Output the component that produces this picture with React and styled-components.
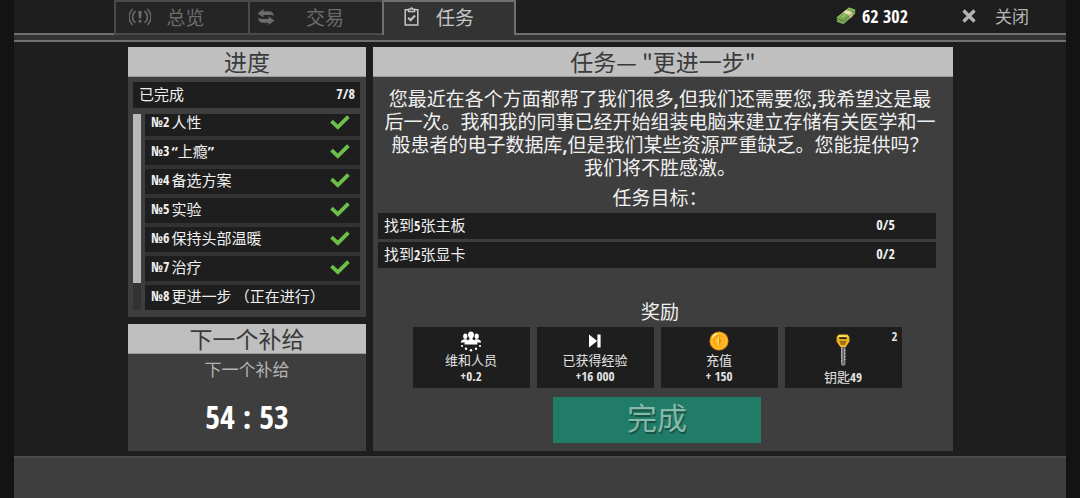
import React from "react";
import styled, { createGlobalStyle } from "styled-components";

const GlobalStyle = createGlobalStyle`
  *, *::before, *::after { box-sizing: border-box; }
  body {
    margin: 0;
    background: #131313;
    color: #f0f0f0;
    font-family: "Noto Sans CJK SC", sans-serif;
    font-size: 15px;
  }
  button { font: inherit; color: inherit; border: 0; padding: 0; background: none; cursor: pointer; }
  h2, h3, p, ul { margin: 0; padding: 0; list-style: none; font-weight: 400; }
  svg { display: block; }
`;

const Screen = styled.div`
  display: flex;
  flex-direction: column;
  min-height: 100vh;
  margin: 0 14px;
  background: #1e1e1e;
`;

/* Numbers are set in a bold condensed face next to regular CJK text. */
const Num = styled.b`
  font-family: "Open Sans Condensed", "Open Sans", sans-serif;
  font-weight: 700;
  font-size: ${(p) => p.$size || 14}px;
  line-height: 1;
`;

const Header = styled.header`
  display: flex;
  align-items: flex-start;
  padding: 0 37px 0 100px;
  background: linear-gradient(to top, #6f6f6f 2px, #333 2px, #333 7px, #6f6f6f 7px, #6f6f6f 9px, transparent 9px);
`;

const Tabs = styled.nav`
  display: flex;
  padding-bottom: 7px;
`;

const Tab = styled.button`
  display: grid;
  grid-template-columns: auto 1fr;
  align-items: center;
  width: 134px;
  height: 35px;
  padding: 0 ${(p) => p.$end}px ${(p) => (p.$active ? 4 : 2)}px ${(p) => p.$start}px;
  border: solid ${(p) => (p.$active ? "#6f6f6f" : "#4a4a4a")};
  border-width: ${(p) => (p.$active ? "2px 2px 0" : "2px 0 2px 2px")};
  background: ${(p) => (p.$active ? "#333" : "#252525")};
  color: ${(p) => (p.$active ? "#c6c6c6" : "#6c6c6c")};
  font-size: 19px;
  line-height: 28px;
  white-space: nowrap;
`;

const HeaderTools = styled.div`
  display: flex;
  align-items: center;
  margin-left: auto;
  height: 32px;
`;

const Money = styled.span`
  display: flex;
  align-items: center;
  gap: 6px;
  margin-right: 54px;
  color: #fff;
`;

const CloseButton = styled.button`
  display: flex;
  align-items: center;
  gap: 19px;
  color: #b4b4b4;
  font-size: 17px;
  line-height: 30px;
`;

const Main = styled.main`
  display: grid;
  grid-template-columns: minmax(0, 238fr) minmax(0, 580fr);
  gap: 7px;
  flex: 1;
  padding: 5px 113px 5px 114px;
`;

const Side = styled.div`
  display: flex;
  flex-direction: column;
  gap: 7px;
`;

const Panel = styled.section`
  display: flex;
  flex-direction: column;
  background: #3e3e3e;
  flex: ${(p) => (p.$grow ? 1 : "none")};
`;

const PanelTitle = styled.h2`
  background: #bfbfbf;
  border-bottom: 1px solid #9a9a9a;
  color: #3a3a3a;
  font-size: 23px;
  line-height: 29px;
  text-align: center;
`;

const Row = styled.div`
  display: flex;
  align-items: center;
  gap: 2px;
  flex: none;
  height: ${(p) => p.$height || 25}px;
  padding: 0 ${(p) => p.$end || 5}px 3px 6px;
  background: #1e1e1e;
  line-height: 22px;
  white-space: nowrap;
`;

const Last = styled.span`
  display: flex;
  margin-left: auto;
`;

const ProgressBody = styled.div`
  display: flex;
  flex-direction: column;
  gap: 6px;
  padding: 5px 6px 7px 5px;
`;

const Scroller = styled.div`
  display: grid;
  grid-template-columns: 8px 1fr;
  gap: 4px;
  height: 196px;
`;

const Track = styled.div`
  background: #333;
`;

const Thumb = styled.div`
  height: 86%;
  background: #b9b9b9;
`;

const QuestList = styled.ul`
  display: flex;
  flex-direction: column;
  justify-content: flex-end;
  gap: 4px;
  overflow: hidden;
  background: #323232;
`;

const SupplyBody = styled.div`
  display: flex;
  flex-direction: column;
  align-items: center;
  gap: 16px;
  flex: 1;
  padding-top: 2px;
  color: #b4b4b4;
  font-size: 17px;
  line-height: 25px;
`;

const Timer = styled(Num)`
  color: #fff;
  line-height: 40px;
`;

const QuestBody = styled.div`
  display: flex;
  flex-direction: column;
  flex: 1;
  padding: 9px 17px 8px 5px;
  text-align: center;
`;

const Story = styled.p`
  margin-right: -6px;
  font-size: 19px;
  line-height: 23px;
`;

const Line = styled.span`
  display: block;
`;

const Comma = styled.span`
  font-family: "Open Sans Condensed", "Open Sans", sans-serif;
  line-height: 1;
`;

const SubTitle = styled.h3`
  margin-top: ${(p) => p.$gap}px;
  margin-right: -6px;
  font-size: 19px;
  line-height: 27px;
`;

const Goals = styled.ul`
  display: flex;
  flex-direction: column;
  gap: 3px;
  margin-top: 3px;
`;

const Rewards = styled.ul`
  display: grid;
  grid-template-columns: repeat(4, 117px);
  justify-content: center;
  gap: 7px;
  margin-top: 3px;
`;

const Reward = styled.li`
  position: relative;
  display: flex;
  flex-direction: column;
  align-items: center;
  height: 61px;
  padding-top: 3px;
  background: #1e1e1e;
  font-size: 13px;
  line-height: 16px;
  color: #e4e4e4;
`;

const RewardIcon = styled.div`
  display: flex;
  align-items: center;
  height: ${(p) => (p.$tall ? 39 : 22)}px;
`;

const RewardValue = styled(Num)`
  line-height: 17px;
`;

const Count = styled(Num)`
  position: absolute;
  top: 3px;
  right: 4px;
`;

const DoneButton = styled.button`
  align-self: center;
  width: 208px;
  margin-top: 9px;
  padding-bottom: 8px;
  background: #207c66;
  color: #86b9ab;
  font-size: 30px;
  line-height: 38px;
  text-shadow: 1px 2px 1px rgba(0, 0, 0, 0.35);
`;

const Footer = styled.footer`
  height: 42px;
  border-top: 2px solid #4c4c4c;
  background: #3e3e3e;
`;

const AlertIcon = () => (
  <svg width="22" height="18" viewBox="0 0 22 18" fill="none" stroke="currentColor" strokeWidth="1.5">
    <path d="M6.5 3.2a7.2 7.2 0 0 0 0 11.6M15.5 3.2a7.2 7.2 0 0 1 0 11.6M3.8 1a10.6 10.6 0 0 0 0 16M18.2 1a10.6 10.6 0 0 1 0 16" />
    <path d="M9.3 3h3.4l-.6 7.5H9.9zM9.6 12h2.8v2.6H9.6z" fill="currentColor" stroke="none" />
  </svg>
);

const TradeIcon = () => (
  <svg width="18" height="16" viewBox="0 0 18 16" fill="currentColor">
    <path d="M.5 4.4 6.5 0v2.2h5.500c2.800 0 4.600 1.800 4.900 5-1.200-.8-2.600-1.100-4.300-1.100H6.500v2.500z" />
    <path d="M17.5 11.6 11.5 16v-2.200H6c-2.800 0-4.600-1.800-4.900-5 1.200.8 2.600 1.100 4.300 1.100h6.100V7.400z" />
  </svg>
);

const ClipboardIcon = () => (
  <svg width="15" height="19" viewBox="0 0 15 19" fill="none" stroke="currentColor" strokeWidth="1.5">
    <path d="M4 2.800H1.200v15.200h12.600V2.800H11" />
    <path d="M4.500 4.600V2.200h1.700L7.500.9l1.300 1.300h1.700v2.400z" />
    <path d="m4.200 10.800 2.400 2.400 4.400-4.600" strokeWidth="2.2" />
  </svg>
);

const CashIcon = () => (
  <svg width="20" height="18" viewBox="0 0 20 18">
    <path d="M.5 10.500 13 .5l6.500 2.300-.5 4L7.500 17.500 1 15z" fill="#527a35" />
    <path d="M.5 10.500 13 .5l6.500 2.300L7.300 13.300z" fill="#93bf62" />
    <path d="m1 12.500 6.300 2.600L19.200 4.800M1 14l6.400 2.300L19 6.200" fill="none" stroke="#a5cb78" strokeWidth=".7" />
    <path d="M3.300 10.400 13.200 2.300l3.400 1.100-9.400 8.300z" fill="none" stroke="#5f8a3e" strokeWidth=".8" />
    <path d="m7 5.400 3-2.400 6.300 2.600.2 3.600-2.700 2.300-.4-3.600z" fill="#e6dfb4" />
    <path d="m13.400 7.900 2.900-2.300.2 3.600-2.700 2.300z" fill="#b9ae7c" />
  </svg>
);

const CloseIcon = () => (
  <svg width="14" height="14" viewBox="0 0 14 14" stroke="currentColor" strokeWidth="3.4">
    <path d="m1.5 1.500 11 11M12.500 1.500l-11 11" />
  </svg>
);

const CheckIcon = () => (
  <svg width="20" height="15" viewBox="0 0 20 15" fill="none" stroke="#6cc04a" strokeWidth="3.8" role="img" aria-label="已完成">
    <path d="m1.500 6.200 6.300 6L18.400 1.600" />
  </svg>
);

const PeopleIcon = () => (
  <svg width="22" height="21" viewBox="0 0 22 21" fill="#fff">
    <ellipse cx="5.3" cy="5.3" rx="2.1" ry="2.7" />
    <ellipse cx="16.7" cy="5.3" rx="2.1" ry="2.7" />
    <path d="M.8 11.400c0-1.900 1.300-2.200 3.300-3.100h2.600l2 3.100zM21.200 11.400c0-1.900-1.300-2.200-3.300-3.100h-2.600l-2 3.100z" />
    <path d="M11 .4c1.900 0 3 1.300 3 3.200 0 1.500-.6 2.900-1.500 3.700v1.200c2.800 1 5 1.600 5 5.100h-13c0-3.500 2.200-4.100 5-5.100V7.300C8.600 6.500 8 5.100 8 3.600 8 1.700 9.100.4 11 .4z" />
    <circle cx="2" cy="15" r="1.1" />
    <circle cx="6" cy="17.8" r="1.2" />
    <circle cx="11" cy="19.2" r="1.3" />
    <circle cx="16" cy="17.8" r="1.2" />
    <circle cx="20" cy="15" r="1.1" />
  </svg>
);

const SkipIcon = () => (
  <svg width="12" height="14" viewBox="0 0 12 14" fill="#fff">
    <path d="M0 .5 8.200 7 0 13.500zM8.400.5h3.200v13H8.400z" />
  </svg>
);

const CoinIcon = () => (
  <svg width="20" height="20" viewBox="0 0 20 20">
    <circle cx="10" cy="10" r="9.5" fill="#ef9412" />
    <circle cx="10" cy="10" r="8.3" fill="#ffc02e" />
    <circle cx="10" cy="10" r="6.2" fill="#f39d17" />
    <circle cx="10.5" cy="10.3" r="5.3" fill="#ffb522" />
    <path d="M10 5.600 12.600 10 10 14.400 7.400 10z" fill="#ffd84e" />
    <path d="M10 5.600 12.600 10 10 14.400z" fill="#e98c10" />
    <path d="M3.200 6.800A7.600 7.600 0 0 1 8 2.700" fill="none" stroke="#fff0b0" strokeWidth="1.2" />
  </svg>
);

const KeyIcon = () => (
  <svg width="14" height="32" viewBox="0 0 14 32">
    <path d="M5 12h4.400v18.500L7.200 32 5 30.500z" fill="#8d8d8d" />
    <path d="M6.700 13h1v17h-1z" fill="#4a4a4a" />
    <path d="M5 15h1.200M5 18h1.200M5 21h1.200M5 24h1.200M5 27h1.200M8.200 16.500h1.200M8.200 19.500h1.200M8.200 22.500h1.200M8.200 25.500h1.200" stroke="#d2d2d2" />
    <path d="M2.500.5h9L13.400 3v4.500L9.800 13H4.200L.6 7.500V3z" fill="#e9b81f" />
    <path d="M3 1.200h8L12.500 3H1.500z" fill="#ffdf57" />
    <path d="M3.300 3.200h7.400v1.900H3.300z" fill="#2b2412" />
    <path d="M3.300 6.800h7.400L9 11H5z" fill="#a86a12" />
  </svg>
);

const tabs = [
  { label: "总览", Icon: AlertIcon, start: 13, end: 28 },
  { label: "交易", Icon: TradeIcon, start: 7, end: 7 },
  { label: "任务", Icon: ClipboardIcon, start: 20, end: 23, active: true },
];

const quests = [
  { no: 2, name: "人性", done: true },
  { no: 3, name: "“上瘾”", done: true, latinQuotes: true },
  { no: 4, name: "备选方案", done: true },
  { no: 5, name: "实验", done: true },
  { no: 6, name: "保持头部温暖", done: true },
  { no: 7, name: "治疗", done: true },
  { no: 8, name: "更进一步 （正在进行）", done: false },
];

const QuestName = styled.span`
  font-family: ${(p) => (p.$latinQuotes ? '"Open Sans Condensed", ' : "")} "Noto Sans CJK SC", sans-serif;
`;

const goals = [
  { before: "找到", amount: 5, after: "张主板", state: "0/5" },
  { before: "找到", amount: 2, after: "张显卡", state: "0/2" },
];

const rewards = [
  { label: "维和人员", value: "+0.2", Icon: PeopleIcon },
  { label: "已获得经验", value: "+16 000", Icon: SkipIcon },
  { label: "充值", value: "+ 150", Icon: CoinIcon },
];

export default function App() {
  return (
    <Screen>
      <GlobalStyle />
      <Header>
        <Tabs>
          {tabs.map(({ label, Icon, active, start, end }) => (
            <Tab key={label} $active={active} $start={start} $end={end} aria-current={active ? "page" : undefined}>
              <Icon />
              <span>{label}</span>
            </Tab>
          ))}
        </Tabs>
        <HeaderTools>
          <Money>
            <CashIcon />
            <Num $size={18}>62 302</Num>
          </Money>
          <CloseButton>
            <CloseIcon />
            关闭
          </CloseButton>
        </HeaderTools>
      </Header>

      <Main>
        <Side>
          <Panel>
            <PanelTitle>进度</PanelTitle>
            <ProgressBody>
              <Row $height={26}>
                已完成
                <Last>
                  <Num>7/8</Num>
                </Last>
              </Row>
              <Scroller>
                <Track>
                  <Thumb />
                </Track>
                <QuestList>
                  {quests.map((q) => (
                    <Row as="li" key={q.no} $end={10}>
                      <Num>№{q.no}</Num>
                      <QuestName $latinQuotes={q.latinQuotes}>{q.name}</QuestName>
                      {q.done && (
                        <Last>
                          <CheckIcon />
                        </Last>
                      )}
                    </Row>
                  ))}
                </QuestList>
              </Scroller>
            </ProgressBody>
          </Panel>
          <Panel $grow>
            <PanelTitle>下一个补给</PanelTitle>
            <SupplyBody>
              <p>下一个补给</p>
              <Timer $size={32}>54 : 53</Timer>
            </SupplyBody>
          </Panel>
        </Side>

        <Panel>
          <PanelTitle>任务— "更进一步"</PanelTitle>
          <QuestBody>
            <Story>
              <Line>
                您最近在各个方面都帮了我们很多<Comma>,</Comma>但我们还需要您<Comma>,</Comma>我希望这是最
              </Line>
              <Line>后一次。我和我的同事已经开始组装电脑来建立存储有关医学和一</Line>
              <Line>
                般患者的电子数据库<Comma>,</Comma>但是我们某些资源严重缺乏。您能提供吗？
              </Line>
              <Line>我们将不胜感激。</Line>
            </Story>
            <SubTitle $gap={5}>任务目标：</SubTitle>
            <Goals>
              {goals.map((g) => (
                <Row as="li" key={g.after} $height={26} $end={41}>
                  <span>
                    {g.before}
                    <Num>{g.amount}</Num>
                    {g.after}
                  </span>
                  <Last>
                    <Num>{g.state}</Num>
                  </Last>
                </Row>
              ))}
            </Goals>
            <SubTitle $gap={29}>奖励</SubTitle>
            <Rewards>
              {rewards.map(({ label, value, Icon }) => (
                <Reward key={label}>
                  <RewardIcon>
                    <Icon />
                  </RewardIcon>
                  {label}
                  <RewardValue $size={13}>{value}</RewardValue>
                </Reward>
              ))}
              <Reward>
                <RewardIcon $tall>
                  <KeyIcon />
                </RewardIcon>
                <span>
                  钥匙<Num $size={13}>49</Num>
                </span>
                <Count $size={13}>2</Count>
              </Reward>
            </Rewards>
            <DoneButton>完成</DoneButton>
          </QuestBody>
        </Panel>
      </Main>
      <Footer />
    </Screen>
  );
}
